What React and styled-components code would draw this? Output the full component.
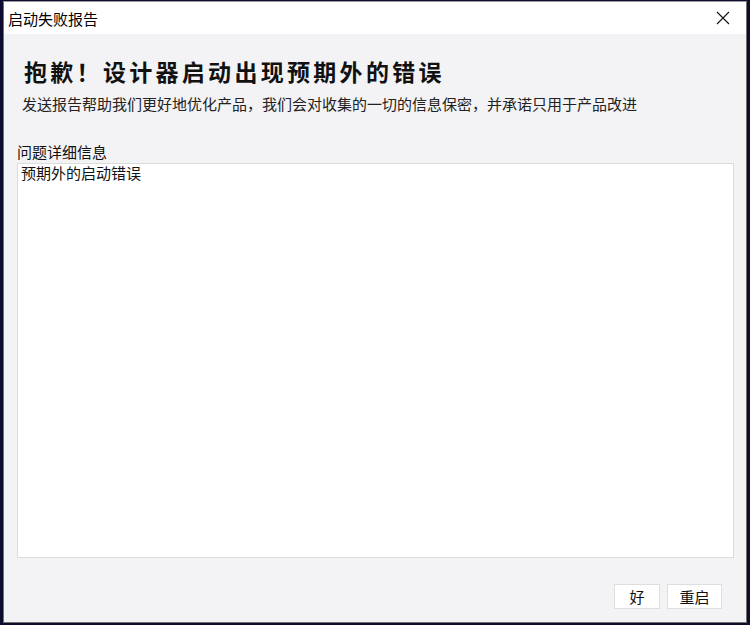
import React from 'react';
import styled, { createGlobalStyle } from 'styled-components';

const GlobalStyle = createGlobalStyle`
  html, body {
    margin: 0;
    padding: 0;
    background: #0d0f35;
    overflow: hidden;
  }
  * {
    box-sizing: border-box;
  }
`;

const cjk = `"Noto Sans CJK SC", "Noto Sans", sans-serif`;

const Screen = styled.div`
  width: 750px;
  height: 625px;
  padding: 1px 0 0 3px;
`;

const Window = styled.div`
  width: 744px;
  height: 622px;
  display: flex;
  flex-direction: column;
  border: 1px solid #707070;
  border-top-color: #9a9a9a;
  background: #f3f3f5;
  box-shadow: 0 2px 6px rgba(0, 0, 0, 0.35);
  font-family: ${cjk};
  color: #1a1a1a;
`;

const TitleBar = styled.div`
  height: 32px;
  flex: none;
  display: flex;
  align-items: center;
  background: #ffffff;
`;

const Title = styled.div`
  flex: 1;
  padding-left: 4px;
  font-size: 15px;
  color: #000;
`;

const CloseButton = styled.button`
  width: 46px;
  height: 32px;
  border: none;
  background: transparent;
  display: flex;
  align-items: center;
  justify-content: center;
  padding: 0;
`;

const Body = styled.div`
  flex: 1;
  display: flex;
  flex-direction: column;
  padding: 22px 12px 12px 13px;
`;

const Heading = styled.h1`
  margin: 0 0 0 7px;
  font-size: 23px;
  line-height: 30px;
  font-weight: 700;
  letter-spacing: 3.3px;
  color: #111;
`;

const Subtitle = styled.p`
  margin: 8px 0 0 5px;
  font-size: 15px;
  line-height: 20px;
  letter-spacing: 0;
  color: #222;
`;

const Label = styled.div`
  margin-top: 29px;
  font-size: 15px;
  line-height: 18px;
  color: #111;
`;

const Details = styled.textarea`
  margin-top: 2px;
  height: 395px;
  width: 100%;
  resize: none;
  border: 1px solid #dcdcdc;
  background: #ffffff;
  padding: 0 3px;
  font-family: ${cjk};
  font-size: 15px;
  line-height: 18px;
  color: #111;
  outline: none;
`;

const Footer = styled.div`
  margin-top: 26px;
  display: flex;
  justify-content: flex-end;
  gap: 7px;
  padding-right: 12px;
`;

const Button = styled.button`
  height: 25px;
  width: ${(p) => p.$width}px;
  border: 1px solid #dedede;
  background: #ffffff;
  font-family: ${cjk};
  font-size: 15px;
  color: #111;
  padding: 0;
`;

const App = () => {
  return (
    <>
      <GlobalStyle />
      <Screen>
        <Window>
          <TitleBar>
            <Title>启动失败报告</Title>
            <CloseButton aria-label="关闭">
              <svg width="14" height="14" viewBox="0 0 14 14">
                <path d="M1 1 L13 13 M13 1 L1 13" stroke="#111" strokeWidth="1.1" />
              </svg>
            </CloseButton>
          </TitleBar>
          <Body>
            <Heading>抱歉！设计器启动出现预期外的错误</Heading>
            <Subtitle>
              发送报告帮助我们更好地优化产品，我们会对收集的一切的信息保密，并承诺只用于产品改进
            </Subtitle>
            <Label>问题详细信息</Label>
            <Details readOnly defaultValue="预期外的启动错误" />
            <Footer>
              <Button $width={46}>好</Button>
              <Button $width={55}>重启</Button>
            </Footer>
          </Body>
        </Window>
      </Screen>
    </>
  );
};

export default App;
